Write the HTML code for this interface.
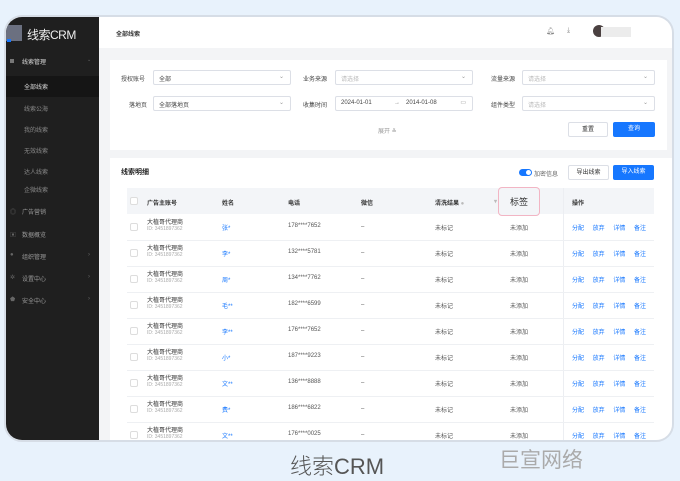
<!DOCTYPE html>
<html><head><meta charset="utf-8"><style>
*{margin:0;padding:0;box-sizing:border-box}
body{width:680px;height:481px;background:#e8f2fc;font-family:"Liberation Sans","Noto Sans CJK SC",sans-serif;position:relative;overflow:hidden;color:#333}
.frame{position:absolute;left:4px;top:15px;width:670px;height:427px;border:2px solid #d6dde6;border-radius:18px;background:#f3f4f6;overflow:hidden}
.a{position:absolute;white-space:nowrap}
.side{position:absolute;left:0;top:0;width:93px;height:100%;background:#1f1f1f}
.si{position:absolute;font-size:6px;color:#bbb}
.sub{color:#8a8a8a;left:18px}
.hdr{position:absolute;left:93px;top:0;right:0;height:31px;background:#fff}
.card{position:absolute;background:#fff}
.lbl{font-size:6px;color:#444}
.sel{position:absolute;height:15px;border:1px solid #dcdfe6;border-radius:2px;background:#fff;font-size:6px;color:#444;padding:3px 5px}
.sel.ph{color:#bbb}
.sel i{position:absolute;right:6px;top:2px;font-style:normal;color:#999;font-size:6px}
.btn{position:absolute;height:15px;border-radius:2px;font-size:6px;text-align:center;line-height:14px}
.th{position:absolute;font-size:6px;color:#333;font-weight:bold}
.td{position:absolute;font-size:6px;color:#555}
.cb{position:absolute;width:8px;height:8px;border:1px solid #ddd;border-radius:2px;background:#fff}
.blue{color:#1677ff}
</style></head><body>
<div class="frame">
 <div class="side">
  <div class="a" style="left:0;top:8px;width:16px;height:16px;background:#6b7080"></div>
  <div class="a" style="left:1px;top:22px;width:4px;height:3px;background:#1677ff"></div>
  <div class="a" style="left:21px;top:9px;font-size:12px;color:#eee;letter-spacing:-0.5px">线索CRM</div>
  <div class="si" style="left:4px;top:42px;width:4px;height:4px;background:#777"></div>
  <div class="si" style="left:16px;top:40px;color:#ddd">线索管理</div>
  <div class="si" style="left:81px;top:40px;color:#666;font-size:5px">⌄</div>
  <div class="a" style="left:0;top:59px;width:93px;height:21px;background:#151515"></div>
  <div class="si" style="left:18px;top:65px;color:#ddd">全部线索</div>
  <div class="si sub" style="top:87px">线索公海</div>
  <div class="si sub" style="top:108px">我的线索</div>
  <div class="si sub" style="top:129px">无效线索</div>
  <div class="si sub" style="top:150px">达人线索</div>
  <div class="si sub" style="top:168px">企微线索</div>
  <div class="si" style="left:4px;top:190px;color:#666">◎</div><div class="si" style="left:16px;top:190px;color:#999">广告营销</div>
  <div class="si" style="left:4px;top:213px;color:#666">▣</div><div class="si" style="left:16px;top:213px;color:#999">数据概览</div>
  <div class="si" style="left:4px;top:235px;color:#666">●</div><div class="si" style="left:16px;top:235px;color:#999">组织管理</div><div class="si" style="left:82px;top:235px;color:#666">›</div>
  <div class="si" style="left:4px;top:257px;color:#666">✲</div><div class="si" style="left:16px;top:257px;color:#999">设置中心</div><div class="si" style="left:82px;top:257px;color:#666">›</div>
  <div class="si" style="left:4px;top:279px;color:#666">⬟</div><div class="si" style="left:16px;top:279px;color:#999">安全中心</div><div class="si" style="left:82px;top:279px;color:#666">›</div>
 </div>
 <div class="hdr">
  <div class="a" style="left:17px;top:12px;font-size:6px;color:#333;font-weight:bold">全部线索</div>
  <div class="a" style="left:447px;top:10px;font-size:7px;color:#888">🔔︎</div>
  <div class="a" style="left:468px;top:10px;font-size:7px;color:#888">⤓</div>
  <div class="a" style="left:494px;top:8px;width:12px;height:12px;border-radius:6px;background:#4a4040"></div>
  <div class="a" style="left:502px;top:10px;width:30px;height:10px;background:#ececec"></div>
 </div>
 <div class="card" style="left:104px;top:43px;width:557px;height:90px">
  <div class="a lbl" style="left:11px;top:14px">授权账号</div>
  <div class="sel" style="left:43px;top:10px;width:138px">全部<i>⌄</i></div>
  <div class="a lbl" style="left:193px;top:14px">业务来源</div>
  <div class="sel ph" style="left:225px;top:10px;width:138px">请选择<i>⌄</i></div>
  <div class="a lbl" style="left:381px;top:14px">流量来源</div>
  <div class="sel ph" style="left:412px;top:10px;width:133px">请选择<i>⌄</i></div>
  <div class="a lbl" style="left:19px;top:40px">落地页</div>
  <div class="sel" style="left:43px;top:36px;width:138px">全部落地页<i>⌄</i></div>
  <div class="a lbl" style="left:193px;top:40px">收集时间</div>
  <div class="sel" style="left:225px;top:36px;width:138px">2024-01-01<span style="position:absolute;left:58px;color:#888">→</span><span style="position:absolute;left:70px">2014-01-08</span><i>▭</i></div>
  <div class="a lbl" style="left:381px;top:40px">组件类型</div>
  <div class="sel ph" style="left:412px;top:36px;width:133px">请选择<i>⌄</i></div>
  <div class="a" style="left:268px;top:66px;font-size:6px;color:#999">展开 ≚</div>
  <div class="btn" style="left:458px;top:62px;width:40px;border:1px solid #dcdfe6;color:#333">重置</div>
  <div class="btn" style="left:503px;top:62px;width:42px;background:#1677ff;color:#fff">查询</div>
 </div>
 <div class="card" style="left:104px;top:141px;width:563px;height:300px">
  <div class="a" style="left:11px;top:9px;font-size:7px;color:#222;font-weight:bold">线索明细</div>
  <div class="a" style="left:409px;top:11px;width:13px;height:7px;border-radius:4px;background:#1677ff"><div style="position:absolute;right:1px;top:1px;width:5px;height:5px;border-radius:3px;background:#fff"></div></div>
  <div class="a" style="left:424px;top:11px;font-size:6px;color:#666">加密信息</div>
  <div class="btn" style="left:458px;top:7px;width:41px;border:1px solid #dcdfe6;color:#333">导出线索</div>
  <div class="btn" style="left:503px;top:7px;width:41px;background:#1677ff;color:#fff">导入线索</div>
  <div class="a" style="left:17px;top:30px;width:527px;height:26px;background:#f3f5f8"></div>
  <div class="a" style="left:453px;top:30px;width:1px;height:270px;background:#eceef2"></div>
  <div class="cb" style="left:20px;top:39px"></div>
  <div class="th" style="left:37px;top:40px">广告主账号</div>
  <div class="th" style="left:112px;top:40px">姓名</div>
  <div class="th" style="left:178px;top:40px">电话</div>
  <div class="th" style="left:251px;top:40px">微信</div>
  <div class="th" style="left:325px;top:40px">清洗结果 <span style="color:#bbb">●</span></div>
  <div class="th" style="left:384px;top:40px;color:#bbb">▾</div>
  <div class="a" style="left:388px;top:29px;width:42px;height:29px;border:1px solid #f2b5c4;border-radius:4px;background:#f3f5f8"></div>
  <div class="a" style="left:400px;top:37px;font-size:9px;color:#333">标签</div>
  <div class="th" style="left:462px;top:40px">操作</div>
  <div id="rows"></div>
 </div>
</div>
<div class="a" style="left:290px;top:449px;font-size:22px;color:#555;font-weight:300">线索CRM</div>
<div class="a" style="left:499px;top:444px;font-size:21px;color:#aaa">巨宣网络</div>
<script>
var n=["张*","李*","周*","毛**","李**","小*","文**","费*","文**"],p=["178****7652","132****5781","134****7762","182****6599","176****7652","187****9223","136****8888","186****6822","176****0025"],h="";
for(var i=0;i<9;i++){var y=56+i*26;
h+='<div class="a" style="left:17px;top:'+(y+26)+'px;width:527px;height:1px;background:#eef0f3"></div>'+
'<div class="cb" style="left:20px;top:'+(y+9)+'px"></div>'+
'<div class="td" style="left:37px;top:'+(y+3)+'px;color:#333">大植哥代理商</div>'+
'<div class="td" style="left:37px;top:'+(y+12)+'px;color:#aaa;font-size:5px">ID: 3451897362</div>'+
'<div class="td blue" style="left:112px;top:'+(y+9)+'px">'+n[i]+'</div>'+
'<div class="td" style="left:178px;top:'+(y+9)+'px">'+p[i]+'</div>'+
'<div class="td" style="left:251px;top:'+(y+10)+'px">–</div>'+
'<div class="td" style="left:325px;top:'+(y+9)+'px">未标记</div>'+
'<div class="td" style="left:400px;top:'+(y+9)+'px">未添加</div>'+
'<div class="td blue" style="left:462px;top:'+(y+9)+'px;word-spacing:7px">分配 放弃 详情 备注</div>';}
document.getElementById("rows").outerHTML=h;
</script>
</body></html>
